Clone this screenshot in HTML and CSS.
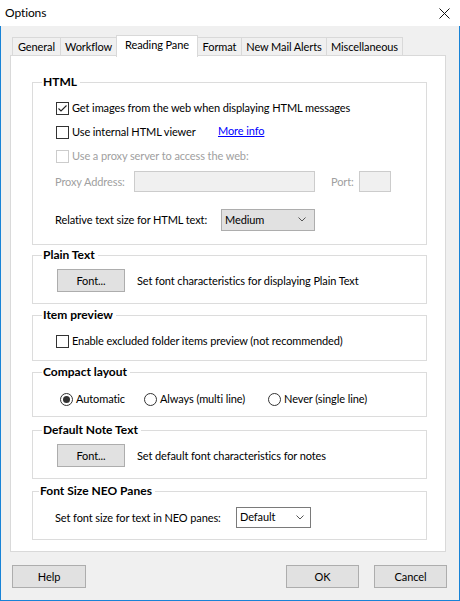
FILE: index.html
```html
<!DOCTYPE html>
<html>
<head>
<meta charset="utf-8">
<link rel="stylesheet" href="styles.css">
</head>
<body>
<div class="window">
  <div class="titlebar">
    <span class="title">Options</span>
    <svg class="close" width="11" height="11" viewBox="0 0 11 11"><path d="M0.5 0.5 L10.5 10.5 M10.5 0.5 L0.5 10.5" stroke="#111" stroke-width="1" fill="none"/></svg>
  </div>
  <div class="frame">
    <div class="tabs">
      <div class="tab t1">General</div>
      <div class="tab t2">Workflow</div>
      <div class="tab t3 active">Reading Pane</div>
      <div class="tab t4">Format</div>
      <div class="tab t5">New Mail Alerts</div>
      <div class="tab t6">Miscellaneous</div>
    </div>
    <div class="panel">
      <fieldset class="group g-html">
        <legend>HTML</legend>
        <div class="gbody">
          <div class="row">
            <span class="cb"><svg width="11" height="11" viewBox="0 0 11 11"><path d="M1.5 5.5 L4 8 L9.5 2.5" stroke="#222" stroke-width="1.1" fill="none"/></svg></span>
            <span class="txt">Get images from the web when displaying HTML messages</span>
          </div>
          <div class="row">
            <span class="cb"></span>
            <span class="txt lbl-viewer">Use internal HTML viewer</span>
            <a class="link" href="#">More info</a>
          </div>
          <div class="row dis">
            <span class="cb cb-dis"></span>
            <span class="txt">Use a proxy server to access the web:</span>
          </div>
          <div class="row row-proxy dis">
            <span class="lbl-proxy">Proxy Address:</span>
            <span class="input in-proxy"></span>
            <span class="lbl-port">Port:</span>
            <span class="input in-port"></span>
          </div>
          <div class="row row-size">
            <span class="lbl-size">Relative text size for HTML text:</span>
            <span class="select sel-size"><span>Medium</span><svg width="8" height="5" viewBox="0 0 8 5"><path d="M0.5 0.5 L4 4 L7.5 0.5" stroke="#555" fill="none"/></svg></span>
          </div>
        </div>
      </fieldset>

      <fieldset class="group g-plain">
        <legend>Plain Text</legend>
        <div class="gbody btnrow">
          <span class="btn btn-font">Font...</span>
          <span class="desc">Set font characteristics for displaying Plain Text</span>
        </div>
      </fieldset>

      <fieldset class="group g-item">
        <legend>Item preview</legend>
        <div class="gbody">
          <div class="row">
            <span class="cb"></span>
            <span class="txt">Enable excluded folder items preview (not recommended)</span>
          </div>
        </div>
      </fieldset>

      <fieldset class="group g-compact">
        <legend>Compact layout</legend>
        <div class="gbody">
          <div class="row row-radio">
            <span class="opt opt1"><span class="radio on"></span><span class="txt">Automatic</span></span>
            <span class="opt opt2"><span class="radio"></span><span class="txt">Always (multi line)</span></span>
            <span class="opt"><span class="radio"></span><span class="txt">Never (single line)</span></span>
          </div>
        </div>
      </fieldset>

      <fieldset class="group g-note">
        <legend>Default Note Text</legend>
        <div class="gbody btnrow">
          <span class="btn btn-font">Font...</span>
          <span class="desc">Set default font characteristics for notes</span>
        </div>
      </fieldset>

      <fieldset class="group g-neo">
        <legend>Font Size NEO Panes</legend>
        <div class="gbody">
          <div class="row row-neo">
            <span class="lbl-neo">Set font size for text in NEO panes:</span>
            <span class="select sel-neo"><span>Default</span><svg width="8" height="5" viewBox="0 0 8 5"><path d="M0.5 0.5 L4 4 L7.5 0.5" stroke="#555" fill="none"/></svg></span>
          </div>
        </div>
      </fieldset>
    </div>
    <div class="buttons">
      <span class="btn btn-dlg">Help</span>
      <span class="spacer"></span>
      <span class="btn btn-dlg">OK</span>
      <span class="btn btn-dlg">Cancel</span>
    </div>
  </div>
</div>
</body>
</html>
```

FILE: styles.css
```css
* { box-sizing: border-box; }
html, body { margin: 0; padding: 0; background: #fff; }
body {
  font-family: Lato, "Noto Sans", sans-serif;
  font-size: 11px;
  letter-spacing: -0.1px;
  color: #000;
}
.window {
  width: 460px;
  height: 601px;
  display: flex;
  flex-direction: column;
  background: #fff;
  overflow: hidden;
}
.titlebar {
  height: 26px;
  flex: none;
  display: flex;
  align-items: center;
  justify-content: space-between;
  padding: 0 10px 0 5px;
  background: #fff;
}
.title { font-size: 12px; line-height: 16px; }
.close { display: block; }

.frame {
  flex: 1;
  background: #f0f0f0;
  border: 1px solid #1883d7;
  border-top: 0;
  display: flex;
  flex-direction: column;
  padding-top: 9px;
}

/* tabs */
.tabs {
  height: 20px;
  display: flex;
  align-items: flex-end;
  margin-left: 11px;
  flex: none;
}
.tab {
  height: 18px;
  border: 1px solid #d9d9d9;
  border-bottom: 0;
  background: #f0f0f0;
  display: flex;
  align-items: center;
  justify-content: center;
  line-height: 16px;
  margin-left: -1px;
  padding-top: 1px;
  white-space: nowrap;
}
.tab.t1 { margin-left: 0; width: 49px; }
.tab.t2 { width: 57px; }
.tab.t3 { width: 82px; }
.tab.t4 { width: 45px; }
.tab.t5 { width: 86px; }
.tab.t6 { width: 77px; }
.tab.active {
  height: 22px;
  margin-bottom: -2px;
  background: #fff;
  position: relative;
  z-index: 1;
  padding-top: 0;
  padding-bottom: 3px;
}

.panel {
  flex: none;
  margin-left: 9px;
  width: 436px;
  height: 497px;
  background: #fff;
  border: 1px solid #d9d9d9;
  padding: 17px 18px 0 21px;
  display: flex;
  flex-direction: column;
}

/* group boxes */
.group {
  border: 1px solid #dcdcdc;
  margin: 0;
  padding: 0;
  min-width: 0;
}
.group legend {
  font-weight: bold;
  font-size: 12px;
  letter-spacing: 0;
  line-height: 16px;
  padding: 0 3px 0 1px;
  margin-left: 9px;
}
.g-neo legend { margin-left: 6px; }

.g-html { margin-top: 1px; }
.g-html .gbody { padding: 6px 0 13px 23px; }
.g-plain { margin-top: 2px; }
.g-plain .gbody { padding: 6px 0 11px 24px; }
.g-item { margin-top: 3px; }
.g-item .gbody { padding: 6px 0 7px 23px; }
.g-compact { margin-top: 3px; }
.g-compact .gbody { padding: 7px 0 5px 27px; }
.g-note { margin-top: 5px; }
.g-note .gbody { padding: 6px 0 11px 24px; }
.g-neo { margin-top: 4px; }
.g-neo .gbody { padding: 6px 0 10px 22px; }

.row {
  height: 24px;
  display: flex;
  align-items: center;
  white-space: nowrap;
}
.txt { margin-left: 3px; line-height: 16px; }
.dis { color: #a0a0a0; }

.cb {
  width: 13px;
  height: 13px;
  border: 1px solid #333;
  background: #fff;
  flex: none;
  display: flex;
  align-items: center;
  justify-content: center;
}
.cb svg { display: block; }
.cb-dis { border-color: #cccccc; }

.lbl-viewer { width: 146px; }
.link {
  color: #0000ff;
  text-decoration: underline;
  margin-top: -3px;
}

.row-proxy { height: 26px; margin-left: -1px; }
.lbl-proxy { width: 79px; }
.input {
  height: 21px;
  background: #f0f0f0;
  border: 1px solid #cccccc;
  flex: none;
}
.in-proxy { width: 181px; }
.lbl-port { margin-left: 16px; width: 28px; }
.in-port { width: 32px; }

.row-size { height: 23px; margin-top: 14px; margin-left: -1px; }
.lbl-size { width: 166px; }
.select {
  display: flex;
  align-items: center;
  justify-content: space-between;
  flex: none;
  padding: 0 8px 0 3px;
  line-height: 16px;
}
.select svg { display: block; }
.sel-size {
  width: 94px;
  height: 22px;
  background: #e1e1e1;
  border: 1px solid #adadad;
}

.btnrow {
  display: flex;
  align-items: center;
  white-space: nowrap;
}
.btn {
  height: 23px;
  background: #e1e1e1;
  border: 1px solid #adadad;
  display: flex;
  align-items: center;
  justify-content: center;
  flex: none;
  line-height: 16px;
}
.btn-font { width: 68px; }
.desc { margin-left: 12px; line-height: 16px; }

.opt { display: flex; align-items: center; }
.opt1 { width: 84px; }
.opt2 { width: 124px; }
.radio {
  width: 13px;
  height: 13px;
  border: 1px solid #333;
  border-radius: 50%;
  background: #fff;
  flex: none;
  display: flex;
  align-items: center;
  justify-content: center;
}
.radio.on::after {
  content: "";
  width: 7px;
  height: 7px;
  border-radius: 50%;
  background: #333;
}

.lbl-neo { width: 181px; }
.sel-neo {
  width: 75px;
  height: 21px;
  background: #fff;
  border: 1px solid #7a7a7a;
  padding-right: 6px;
}

.buttons {
  flex: none;
  display: flex;
  margin-top: 13px;
  padding: 0 12px 0 11px;
}
.spacer { flex: 1; }
.btn-dlg { width: 73px; }
.btn-dlg + .btn-dlg { margin-left: 15px; }
.buttons .btn-dlg:first-child { width: 74px; }
```
